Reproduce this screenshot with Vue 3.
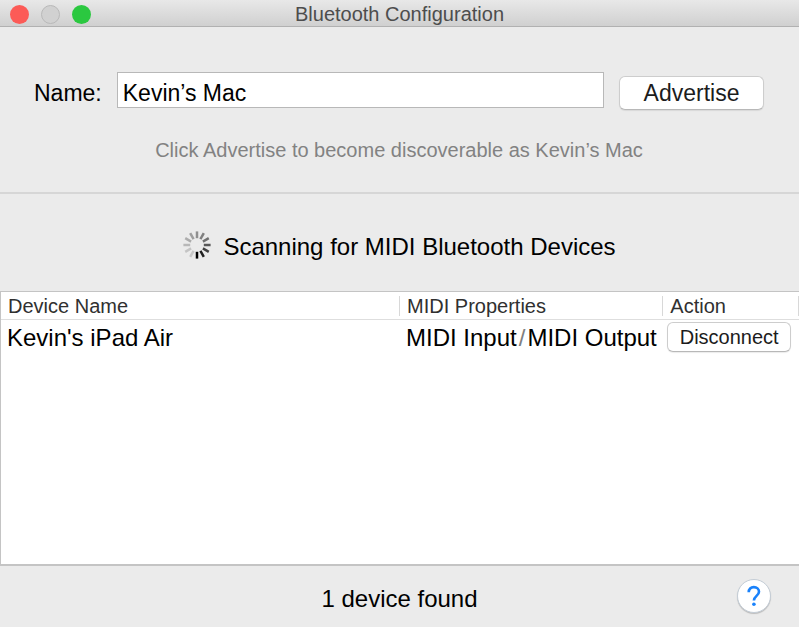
<template>
  <div class="window">
    <header class="titlebar">
      <div class="lights">
        <button class="light close" type="button" aria-label="Close"></button>
        <button class="light minimize" type="button" aria-label="Minimize" disabled></button>
        <button class="light zoom" type="button" aria-label="Zoom"></button>
      </div>
      <h1>Bluetooth Configuration</h1>
    </header>

    <form class="advertise" @submit.prevent>
      <div class="field">
        <label for="name">Name:</label>
        <input id="name" v-model="name" type="text" spellcheck="false" />
        <button class="push" type="submit">Advertise</button>
      </div>
      <p class="hint">Click Advertise to become discoverable as {{ name }}</p>
    </form>

    <div class="scanning">
      <svg class="spinner" viewBox="-14 -14 28 28" aria-hidden="true">
        <line
          v-for="(shade, i) in spokes"
          :key="i"
          x1="0"
          y1="-6.8"
          x2="0"
          y2="-13.6"
          :stroke="shade"
          :transform="`rotate(${i * 30})`"
        />
      </svg>
      <span>Scanning for MIDI Bluetooth Devices</span>
    </div>

    <main class="devices">
      <table>
        <colgroup>
          <col class="col-name" />
          <col class="col-props" />
          <col class="col-action" />
        </colgroup>
        <thead>
          <tr>
            <th><span>Device Name</span></th>
            <th><span>MIDI Properties</span></th>
            <th><span>Action</span></th>
          </tr>
        </thead>
        <tbody>
          <tr v-for="device in devices" :key="device.name">
            <td>{{ device.name }}</td>
            <td>MIDI Input<span class="slash">/</span>MIDI Output</td>
            <td class="action"><button class="push small" type="button">Disconnect</button></td>
          </tr>
        </tbody>
      </table>
    </main>

    <footer class="status">
      <span>{{ devices.length }} device found</span>
      <button class="help" type="button" aria-label="Help">
        <svg viewBox="0 0 34 34" aria-hidden="true">
          <path d="M11.4 13C11.4 9.6 13.6 7.6 16.8 7.6C20 7.6 22.3 9.5 22.3 12.5C22.3 16.8 16.9 17 16.9 21.8" />
          <circle cx="16.9" cy="25.8" r="1.9" />
        </svg>
      </button>
    </footer>
  </div>
</template>

<script setup>
import { ref } from 'vue'

const name = ref('Kevin’s Mac')
const devices = ref([{ name: "Kevin's iPad Air" }])

// clockwise from the top
const spokes = [
  '#8f8f8f',
  '#808080',
  '#707070',
  '#585858',
  '#404040',
  '#202020',
  '#000000',
  '#c8c8c8',
  '#c4c4c4',
  '#b8b8b8',
  '#acacac',
  '#9e9e9e',
]
</script>

<style>
body {
  margin: 0;
}
</style>

<style scoped>
.window {
  display: flex;
  flex-direction: column;
  min-height: 100vh;
  background: #ebebeb;
  color: #000;
  font-family: 'Liberation Sans', Arial, sans-serif;
  font-size: 24px;
  line-height: 28px;
}
button,
input {
  box-sizing: border-box;
  margin: 0;
  font-family: inherit;
  color: inherit;
}
.titlebar {
  display: grid;
  grid-template-columns: 1fr auto 1fr;
  align-items: center;
  height: 26px;
  background: linear-gradient(#e8e8e8, #d0d0d0);
  border-bottom: 1px solid #b1b1b1;
}
.titlebar h1 {
  margin: 0;
  font-size: 20px;
  font-weight: normal;
  color: #4d4d4d;
}
.lights {
  display: flex;
  gap: 12px;
  padding-left: 10px;
}
.light {
  width: 19px;
  height: 19px;
  padding: 0;
  border: 0;
  border-radius: 50%;
}
.close {
  background: #fc5b57;
}
.minimize {
  background: #d1d1d1;
  border: 1px solid #b9b9b9;
}
.zoom {
  background: #2bc840;
}
.advertise {
  padding: 45px 35px 28px 34px;
  border-bottom: 2px solid #d6d6d6;
}
.field {
  display: flex;
  align-items: flex-start;
  font-size: 23px;
}
.field label {
  margin-right: 15px;
  padding-top: 7px;
}
.field input {
  flex: 1;
  min-width: 0;
  height: 36px;
  padding: 6px 5px 0;
  border: 1px solid #b8b8b8;
  border-radius: 0;
  outline: none;
  background: #fff;
  font-size: 23px;
}
.push {
  border: 1px solid #cdcdcd;
  border-bottom-color: #b8b8b8;
  border-radius: 6px;
  background: #fff;
  box-shadow: 0 1px 1px rgba(0, 0, 0, 0.08);
  color: #1c1c1c;
}
.field .push {
  width: 145px;
  height: 34px;
  margin: 4px 0 0 15px;
  padding: 0;
  font-size: 23px;
}
.hint {
  margin: 26px 0 0;
  font-size: 20px;
  text-align: center;
  color: #828282;
}
.scanning {
  display: flex;
  align-items: flex-start;
  justify-content: center;
  gap: 12px;
  padding: 37px 0 30px;
}
.spinner {
  width: 28px;
  height: 28px;
}
.scanning span {
  padding-top: 2px;
}
.spinner line {
  stroke-width: 2.5;
}
.devices {
  flex: 1;
  background: #fff;
  border: 1px solid #c4c4c4;
  border-width: 1px 0 2px 1px;
}
table {
  width: 100%;
  table-layout: fixed;
  border-collapse: collapse;
}
.col-props {
  width: 33%;
}
.col-action {
  width: 17%;
}
th {
  height: 27px;
  padding: 0;
  border-bottom: 1px solid #dedede;
  font-size: 20px;
  font-weight: normal;
  line-height: 20px;
  text-align: left;
  color: #303030;
}
th span {
  display: block;
  padding-left: 7px;
  border-right: 1px solid #d8d8d8;
}
td {
  height: 34px;
  padding: 2px 0 0 6px;
  box-sizing: border-box;
  white-space: nowrap;
}
.slash {
  padding: 0 2px;
  color: #808080;
}
td.action {
  padding: 0 8px 0 4px;
}
.small {
  display: block;
  width: 100%;
  height: 30px;
  padding: 1px 0 0;
  font-size: 20px;
}
.status {
  display: grid;
  grid-template-columns: 1fr auto 1fr;
  align-items: center;
  height: 61px;
}
.status span {
  grid-column: 2;
  padding-top: 4px;
}
.help {
  justify-self: end;
  width: 34px;
  height: 34px;
  margin: 0 28px 2px 0;
  padding: 0;
  border: 1px solid #c4cdd6;
  border-radius: 50%;
  background: #fff;
  box-shadow: 0 1px 1px rgba(0, 0, 0, 0.2);
}
.help svg {
  display: block;
  width: 100%;
}
.help path {
  fill: none;
  stroke: #1a82fb;
  stroke-width: 2.8;
}
.help circle {
  fill: #1a82fb;
}
</style>
